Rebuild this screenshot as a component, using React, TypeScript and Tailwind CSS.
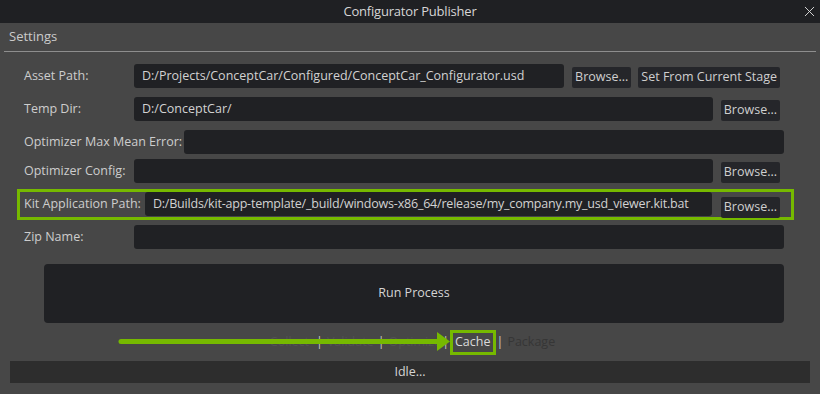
import { X } from "lucide-react";

const field = "h-[24px] min-w-0 flex items-center px-[8px] bg-[#202124] rounded-[3px] text-[#d2d2d2] whitespace-nowrap overflow-hidden";
const btn = "h-[21px] flex items-center px-[3px] bg-[#25262a] rounded-[2px] text-[#cfcfcf] whitespace-nowrap";

function Row({
  label,
  value,
  buttons = [],
  labelWidth = "w-[105px]",
  className = "",
}: {
  label: string;
  value?: string;
  buttons?: string[];
  labelWidth?: string;
  className?: string;
}) {
  return (
    <div className={`flex items-end ${className}`}>
      <div className={`${labelWidth} shrink-0 h-[24px] flex items-center text-[#cdcdcd] whitespace-nowrap`}>{label}</div>
      <div className={`${field} flex-1 ml-[5px]`}>{value}</div>
      {buttons.length > 0 && (
        <div className="flex gap-[7px] ml-[8px] mr-[4px]">
          {buttons.map((b) => (
            <div key={b} className={btn}>
              {b}
            </div>
          ))}
        </div>
      )}
    </div>
  );
}

export default function App() {
  return (
    <div className="w-[820px] h-[394px] bg-[#474747] font-['Open_Sans',sans-serif] text-[12.5px] flex flex-col overflow-hidden">
      {/* Title bar */}
      <div className="h-[23px] shrink-0 bg-[#1f2023] relative flex items-center justify-center text-[#d6d6d6] text-[13px] tracking-[-0.2px]">
        Configurator Publisher
        <X className="absolute right-[2px] top-[3px] h-[17px] w-[17px] text-[#e0e0e0]" strokeWidth={1.3} />
      </div>

      {/* Settings header */}
      <div className="h-[28px] shrink-0 pl-[9px] flex items-center text-[#cbcbcb] text-[13px]">Settings</div>
      <div className="mx-[4px] h-px bg-[#8e8e8e]" />

      {/* Fields */}
      <div className="pl-[24px] pr-[36px] pt-[12px] flex flex-col">
        <Row
          label="Asset Path:"
          value="D:/Projects/ConceptCar/Configured/ConceptCar_Configurator.usd"
          buttons={["Browse...", "Set From Current Stage"]}
        />
        <Row label="Temp Dir:" value="D:/ConceptCar/" buttons={["Browse..."]} className="mt-[9px]" />
        <Row label="Optimizer Max Mean Error:" labelWidth="w-[155px]" className="mt-[9px]" />
        <Row label="Optimizer Config:" buttons={["Browse..."]} className="mt-[5px]" />
        <div className="mt-[6px] -ml-[7px] w-[777px] h-[31px] border-[3px] border-[#76b900] pl-[4px] flex items-start">
          <div className="flex items-end w-full pr-[11px]">
            <div className="shrink-0 h-[23px] flex items-center text-[#cdcdcd] whitespace-nowrap">Kit Application Path:</div>
            <div className={`${field} h-[23px] flex-1 ml-[4px] tracking-[-0.2px]`}>
              D:/Builds/kit-app-template/_build/windows-x86_64/release/my_company.my_usd_viewer.kit.bat
            </div>
            <div className={`${btn} ml-[9px] mb-[-2px]`}>Browse...</div>
          </div>
        </div>
        <Row label="Zip Name:" className="mt-[5px]" />
      </div>

      {/* Run button */}
      <div className="mx-[44px] mt-[15px] w-[740px] h-[59px] shrink-0 bg-[#202124] rounded-[4px] flex items-center justify-center text-[#d4d4d4]">
        Run Process
      </div>

      {/* Steps */}
      <div className="relative h-[38px] shrink-0 flex items-center justify-center pl-[5px]">
        <div className="flex items-center whitespace-nowrap">
          <span className="text-[#525252]">Collect</span>
          <span className="text-[#c8c8c8] ml-[7px] mr-[4px]">|</span>
          <span className="text-[#525252]">Validate</span>
          <span className="text-[#c8c8c8] mx-[4px]">|</span>
          <span className="text-[#525252]">Optimize</span>
          <span className="text-[#c8c8c8] ml-[1px] mr-[1px]">|</span>
          <span className="h-[25px] px-[2px] border-[3px] border-[#76b900] flex items-center text-[#dadada]">Cache</span>
          <span className="text-[#c8c8c8] ml-[1px] mr-[4px]">|</span>
          <span className="text-[#363636]">Package</span>
        </div>
        {/* annotation arrow */}
        <svg className="absolute left-[116px] top-[8px]" width="336" height="22" viewBox="0 0 336 22">
          <line x1="5" y1="10.5" x2="325" y2="10.5" stroke="#76b900" strokeWidth="5" strokeLinecap="round" />
          <polygon points="321,1 334,10.5 321,20" fill="#76b900" />
        </svg>
      </div>

      {/* Status */}
      <div className="mx-[10px] h-[22px] shrink-0 bg-[#2d2d2d] flex items-center justify-center text-[#d4d4d4]">Idle...</div>
    </div>
  );
}
